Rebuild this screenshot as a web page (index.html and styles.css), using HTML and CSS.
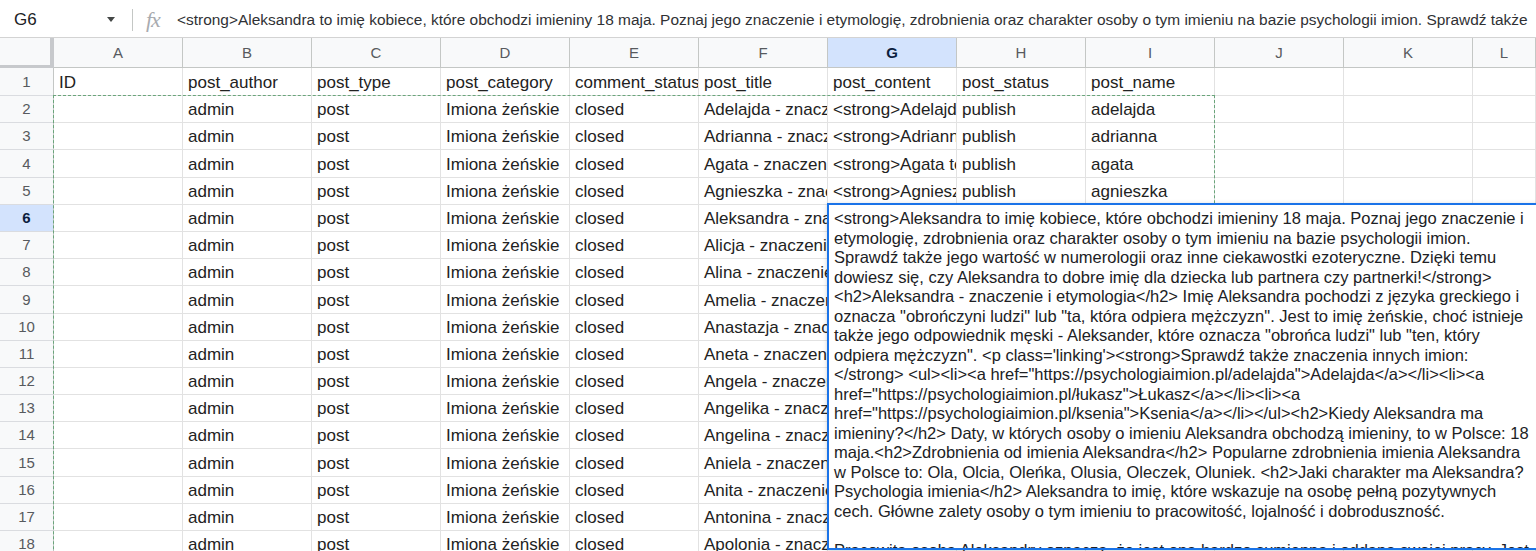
FILE: index.html
```html
<!DOCTYPE html>
<html lang="pl">
<head>
<meta charset="utf-8">
<title>Arkusz</title>
<link rel="stylesheet" href="styles.css">
</head>
<body>
<div class="app">
  <div class="formula-bar">
    <div class="namebox"><span class="cellref">G6</span><span class="caret"></span></div>
    <div class="sep"></div>
    <div class="fx">fx</div>
    <div class="formula"><div class="formula-text">&lt;strong&gt;Aleksandra to imię kobiece, które obchodzi imieniny 18 maja. Poznaj jego znaczenie i etymologię, zdrobnienia oraz charakter osoby o tym imieniu na bazie psychologii imion. Sprawdź także jego wartość w numerologii oraz inne ciekawostki ezoteryczne.</div></div>
  </div>
  <div class="sheet-wrap">
    <div class="sheet">
      <div class="corner"></div>
      <div class="ch">A</div><div class="ch">B</div><div class="ch">C</div><div class="ch">D</div><div class="ch">E</div><div class="ch">F</div><div class="ch ch-sel">G</div><div class="ch">H</div><div class="ch">I</div><div class="ch">J</div><div class="ch">K</div><div class="ch">L</div>

      <div class="rh">1</div><div class="c">ID</div><div class="c">post_author</div><div class="c">post_type</div><div class="c">post_category</div><div class="c">comment_status</div><div class="c">post_title</div><div class="c">post_content</div><div class="c">post_status</div><div class="c">post_name</div><div class="c"></div><div class="c"></div><div class="c"></div>

      <div class="rh">2</div><div class="c"></div><div class="c">admin</div><div class="c">post</div><div class="c">Imiona żeńskie</div><div class="c">closed</div><div class="c">Adelajda - znaczenie imienia</div><div class="c">&lt;strong&gt;Adelajda to imię kobiece</div><div class="c">publish</div><div class="c">adelajda</div><div class="c"></div><div class="c"></div><div class="c"></div>

      <div class="rh">3</div><div class="c"></div><div class="c">admin</div><div class="c">post</div><div class="c">Imiona żeńskie</div><div class="c">closed</div><div class="c">Adrianna - znaczenie imienia</div><div class="c">&lt;strong&gt;Adrianna to imię kobiece</div><div class="c">publish</div><div class="c">adrianna</div><div class="c"></div><div class="c"></div><div class="c"></div>

      <div class="rh">4</div><div class="c"></div><div class="c">admin</div><div class="c">post</div><div class="c">Imiona żeńskie</div><div class="c">closed</div><div class="c">Agata - znaczenie imienia</div><div class="c">&lt;strong&gt;Agata to imię kobiece</div><div class="c">publish</div><div class="c">agata</div><div class="c"></div><div class="c"></div><div class="c"></div>

      <div class="rh">5</div><div class="c"></div><div class="c">admin</div><div class="c">post</div><div class="c">Imiona żeńskie</div><div class="c">closed</div><div class="c">Agnieszka - znaczenie imienia</div><div class="c">&lt;strong&gt;Agnieszka to imię kobiece</div><div class="c">publish</div><div class="c">agnieszka</div><div class="c"></div><div class="c"></div><div class="c"></div>

      <div class="rh rh-sel">6</div><div class="c"></div><div class="c">admin</div><div class="c">post</div><div class="c">Imiona żeńskie</div><div class="c">closed</div><div class="c">Aleksandra - znaczenie imienia</div><div class="c"></div><div class="c">publish</div><div class="c">aleksandra</div><div class="c"></div><div class="c"></div><div class="c"></div>

      <div class="rh">7</div><div class="c"></div><div class="c">admin</div><div class="c">post</div><div class="c">Imiona żeńskie</div><div class="c">closed</div><div class="c">Alicja - znaczenie imienia</div><div class="c"></div><div class="c">publish</div><div class="c">alicja</div><div class="c"></div><div class="c"></div><div class="c"></div>

      <div class="rh">8</div><div class="c"></div><div class="c">admin</div><div class="c">post</div><div class="c">Imiona żeńskie</div><div class="c">closed</div><div class="c">Alina - znaczenie imienia</div><div class="c"></div><div class="c">publish</div><div class="c">alina</div><div class="c"></div><div class="c"></div><div class="c"></div>

      <div class="rh">9</div><div class="c"></div><div class="c">admin</div><div class="c">post</div><div class="c">Imiona żeńskie</div><div class="c">closed</div><div class="c">Amelia - znaczenie imienia</div><div class="c"></div><div class="c">publish</div><div class="c">amelia</div><div class="c"></div><div class="c"></div><div class="c"></div>

      <div class="rh">10</div><div class="c"></div><div class="c">admin</div><div class="c">post</div><div class="c">Imiona żeńskie</div><div class="c">closed</div><div class="c">Anastazja - znaczenie imienia</div><div class="c"></div><div class="c">publish</div><div class="c">anastazja</div><div class="c"></div><div class="c"></div><div class="c"></div>

      <div class="rh">11</div><div class="c"></div><div class="c">admin</div><div class="c">post</div><div class="c">Imiona żeńskie</div><div class="c">closed</div><div class="c">Aneta - znaczenie imienia</div><div class="c"></div><div class="c">publish</div><div class="c">aneta</div><div class="c"></div><div class="c"></div><div class="c"></div>

      <div class="rh">12</div><div class="c"></div><div class="c">admin</div><div class="c">post</div><div class="c">Imiona żeńskie</div><div class="c">closed</div><div class="c">Angela - znaczenie imienia</div><div class="c"></div><div class="c">publish</div><div class="c">angela</div><div class="c"></div><div class="c"></div><div class="c"></div>

      <div class="rh">13</div><div class="c"></div><div class="c">admin</div><div class="c">post</div><div class="c">Imiona żeńskie</div><div class="c">closed</div><div class="c">Angelika - znaczenie imienia</div><div class="c"></div><div class="c">publish</div><div class="c">angelika</div><div class="c"></div><div class="c"></div><div class="c"></div>

      <div class="rh">14</div><div class="c"></div><div class="c">admin</div><div class="c">post</div><div class="c">Imiona żeńskie</div><div class="c">closed</div><div class="c">Angelina - znaczenie imienia</div><div class="c"></div><div class="c">publish</div><div class="c">angelina</div><div class="c"></div><div class="c"></div><div class="c"></div>

      <div class="rh">15</div><div class="c"></div><div class="c">admin</div><div class="c">post</div><div class="c">Imiona żeńskie</div><div class="c">closed</div><div class="c">Aniela - znaczenie imienia</div><div class="c"></div><div class="c">publish</div><div class="c">aniela</div><div class="c"></div><div class="c"></div><div class="c"></div>

      <div class="rh">16</div><div class="c"></div><div class="c">admin</div><div class="c">post</div><div class="c">Imiona żeńskie</div><div class="c">closed</div><div class="c">Anita - znaczenie imienia</div><div class="c"></div><div class="c">publish</div><div class="c">anita</div><div class="c"></div><div class="c"></div><div class="c"></div>

      <div class="rh">17</div><div class="c"></div><div class="c">admin</div><div class="c">post</div><div class="c">Imiona żeńskie</div><div class="c">closed</div><div class="c">Antonina - znaczenie imienia</div><div class="c"></div><div class="c">publish</div><div class="c">antonina</div><div class="c"></div><div class="c"></div><div class="c"></div>

      <div class="rh">18</div><div class="c"></div><div class="c">admin</div><div class="c">post</div><div class="c">Imiona żeńskie</div><div class="c">closed</div><div class="c">Apolonia - znaczenie imienia</div><div class="c"></div><div class="c">publish</div><div class="c">apolonia</div><div class="c"></div><div class="c"></div><div class="c"></div>
    </div>

    <div class="copy-range"></div>

    <div class="editor">
      <div class="ln">&lt;strong&gt;Aleksandra to imię kobiece, które obchodzi imieniny 18 maja. Poznaj jego znaczenie i</div>
      <div class="ln">etymologię, zdrobnienia oraz charakter osoby o tym imieniu na bazie psychologii imion.</div>
      <div class="ln">Sprawdź także jego wartość w numerologii oraz inne ciekawostki ezoteryczne. Dzięki temu</div>
      <div class="ln">dowiesz się, czy Aleksandra to dobre imię dla dziecka lub partnera czy partnerki!&lt;/strong&gt;</div>
      <div class="ln">&lt;h2&gt;Aleksandra - znaczenie i etymologia&lt;/h2&gt; Imię Aleksandra pochodzi z języka greckiego i</div>
      <div class="ln">oznacza "obrończyni ludzi" lub "ta, która odpiera mężczyzn". Jest to imię żeńskie, choć istnieje</div>
      <div class="ln">także jego odpowiednik męski - Aleksander, które oznacza "obrońca ludzi" lub "ten, który</div>
      <div class="ln">odpiera mężczyzn". &lt;p class='linking'&gt;&lt;strong&gt;Sprawdź także znaczenia innych imion:</div>
      <div class="ln">&lt;/strong&gt; &lt;ul&gt;&lt;li&gt;&lt;a href="https://psychologiaimion.pl/adelajda"&gt;Adelajda&lt;/a&gt;&lt;/li&gt;&lt;li&gt;&lt;a</div>
      <div class="ln">href="https://psychologiaimion.pl/łukasz"&gt;Łukasz&lt;/a&gt;&lt;/li&gt;&lt;li&gt;&lt;a</div>
      <div class="ln">href="https://psychologiaimion.pl/ksenia"&gt;Ksenia&lt;/a&gt;&lt;/li&gt;&lt;/ul&gt;&lt;h2&gt;Kiedy Aleksandra ma</div>
      <div class="ln">imieniny?&lt;/h2&gt; Daty, w których osoby o imieniu Aleksandra obchodzą imieniny, to w Polsce: 18</div>
      <div class="ln">maja.&lt;h2&gt;Zdrobnienia od imienia Aleksandra&lt;/h2&gt; Popularne zdrobnienia imienia Aleksandra</div>
      <div class="ln">w Polsce to: Ola, Olcia, Oleńka, Olusia, Oleczek, Oluniek. &lt;h2&gt;Jaki charakter ma Aleksandra?</div>
      <div class="ln">Psychologia imienia&lt;/h2&gt; Aleksandra to imię, które wskazuje na osobę pełną pozytywnych</div>
      <div class="ln">cech. Główne zalety osoby o tym imieniu to pracowitość, lojalność i dobroduszność.</div>
      <div class="ln">&nbsp;</div>
      <div class="ln">Pracowita osoba Aleksandry oznacza, że jest ona bardzo sumienna i oddana swojej pracy. Jest</div>
    </div>
  </div>
</div>
</body>
</html>
```

FILE: styles.css
```css
html, body {
  margin: 0;
  padding: 0;
  background: #ffffff;
  overflow: hidden;
}

.app {
  width: 1536px;
  height: 551px;
  display: flex;
  flex-direction: column;
  font-family: "Liberation Sans", Arial, sans-serif;
  color: #202124;
  overflow: hidden;
}

/* formula bar */
.formula-bar {
  height: 38px;
  flex: 0 0 38px;
  box-sizing: border-box;
  padding-top: 2px;
  border-bottom: 1px solid #d3d3d3;
  display: flex;
  align-items: center;
  background: #ffffff;
}

.namebox {
  width: 124px;
  box-sizing: border-box;
  padding-left: 14px;
  padding-right: 9px;
  display: flex;
  align-items: center;
  justify-content: space-between;
}

.cellref {
  font-size: 17px;
  color: #202124;
}

.caret {
  width: 0;
  height: 0;
  border-left: 4.5px solid transparent;
  border-right: 4.5px solid transparent;
  border-top: 5px solid #444746;
}

.sep {
  width: 1px;
  height: 22px;
  background: #c4c7c5;
  margin-left: 8px;
}

.fx {
  margin-left: 13px;
  width: 19px;
  font-family: "Liberation Serif", "DejaVu Serif", serif;
  font-style: italic;
  font-size: 22px;
  color: #a8abaf;
  letter-spacing: -1px;
  line-height: 1;
}

.formula {
  margin-left: 12px;
  margin-right: 8px;
  flex: 1;
  min-width: 0;
  overflow: hidden;
}

.formula-text {
  font-size: 15.45px;
  color: #303134;
  white-space: nowrap;
}

/* sheet */
.sheet-wrap {
  position: relative;
  flex: 1;
  overflow: hidden;
}

.sheet {
  display: grid;
  grid-template-columns: 54px repeat(11, 129px) 63px;
  grid-template-rows: 30px 28px;
  grid-auto-rows: 27.2px;
}

.corner {
  background: #f8f9fa;
  box-sizing: border-box;
  border-right: 4px solid #c7c9cc;
  border-bottom: 3px solid #c7c9cc;
}

.ch {
  background: #f8f9fa;
  box-sizing: border-box;
  border-right: 1px solid #c4c7c5;
  border-bottom: 1px solid #c4c7c5;
  display: flex;
  align-items: center;
  justify-content: center;
  font-size: 15px;
  color: #575a5e;
}

.ch-sel {
  background: #d3e3fd;
  color: #0b1e3f;
  font-weight: bold;
}

.rh {
  background: #f8f9fa;
  box-sizing: border-box;
  border-right: 1px solid #c4c7c5;
  border-bottom: 1px solid #dadce0;
  display: flex;
  align-items: flex-end;
  justify-content: center;
  padding-bottom: 4px;
  line-height: 18px;
  font-size: 15px;
  color: #575a5e;
}

.rh-sel {
  background: #d3e3fd;
  color: #0b1e3f;
  font-weight: bold;
}

.c {
  box-sizing: border-box;
  border-right: 1px solid #e2e2e2;
  border-bottom: 1px solid #e2e2e2;
  padding: 0 4px 3px 5px;
  display: flex;
  align-items: flex-end;
  line-height: 19px;
  font-size: 17px;
  color: #222222;
  white-space: nowrap;
  overflow: hidden;
}

/* copy range marching ants */
.copy-range {
  position: absolute;
  left: 53px;
  top: 57px;
  width: 1162px;
  height: 700px;
  box-sizing: border-box;
  border: 1px dashed #6aa57b;
  pointer-events: none;
}

/* in-cell editor */
.editor {
  position: absolute;
  left: 827px;
  top: 165px;
  width: 740px;
  height: 347px;
  box-sizing: border-box;
  border: 2px solid #1a73e8;
  background: #ffffff;
  padding: 4px 0 0 5px;
  overflow: hidden;
  box-shadow: 0 1px 4px rgba(60, 64, 67, 0.25);
}

.ln {
  font-size: 16.5px;
  line-height: 19.5px;
  color: #202124;
  white-space: pre;
}
```
